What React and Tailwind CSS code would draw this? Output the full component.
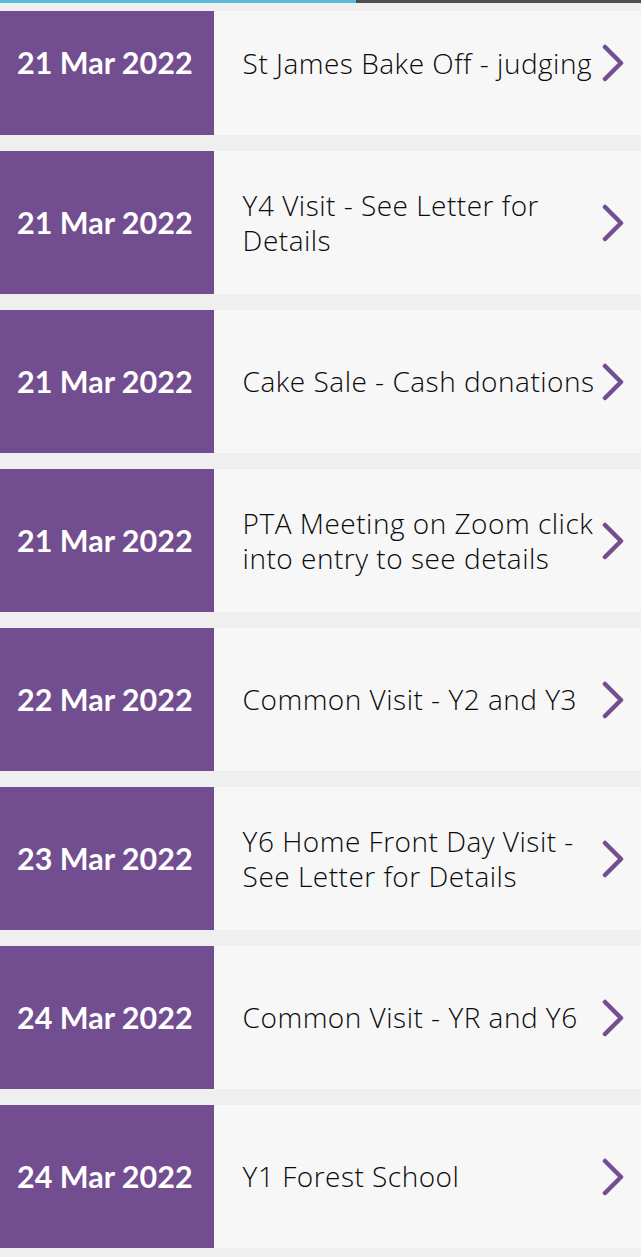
import React from "react";

const rows = [
  { date: "21 Mar 2022", title: "St James Bake Off - judging", first: true },
  { date: "21 Mar 2022", title: "Y4 Visit - See Letter for Details" },
  { date: "21 Mar 2022", title: "Cake Sale - Cash donations" },
  { date: "21 Mar 2022", title: "PTA Meeting on Zoom click into entry to see details" },
  { date: "22 Mar 2022", title: "Common Visit - Y2 and Y3" },
  { date: "23 Mar 2022", title: "Y6 Home Front Day Visit - See Letter for Details" },
  { date: "24 Mar 2022", title: "Common Visit - YR and Y6" },
  { date: "24 Mar 2022", title: "Y1 Forest School" },
];

function Chevron() {
  return (
    <svg width="24" height="38" viewBox="0 0 24 38" fill="none">
      <path d="M4 3 L20 19 L4 35" stroke="#724d8f" strokeWidth="4.5" strokeLinecap="round" strokeLinejoin="round" />
    </svg>
  );
}

function Row({ date, title, first }) {
  return (
    <div className={`flex bg-[#f7f7f7] ${first ? "h-[124px]" : "h-[143px]"}`}>
      <div className={`flex items-center bg-[#724d8f] pl-[17px] pr-[21px] ${first ? "pb-[20px]" : ""}`}>
        <span className="text-white font-bold text-[30.5px] whitespace-nowrap" style={{ fontFamily: "Lato, 'Open Sans', sans-serif" }}>
          {date}
        </span>
      </div>
      <div className={`flex flex-1 items-center pl-[29px] ${first ? "pb-[20px]" : ""}`}>
        <span className="text-[28px] leading-[35px] tracking-[0.5px] text-[#0a0a0a] font-light" style={{ fontFamily: "'Open Sans', Lato, sans-serif" }}>
          {title}
        </span>
      </div>
      <div className={`flex items-center pr-[16px] pl-[1px] ${first ? "pb-[20px]" : ""}`}>
        <Chevron />
      </div>
    </div>
  );
}

export default function App() {
  return (
    <div className="min-h-screen bg-[#efefef]" style={{ fontFamily: "Lato, sans-serif" }}>
      <div className="flex h-[3px]">
        <div className="w-[356px] bg-[#5bbad9]" />
        <div className="flex-1 bg-[#4d4d4d]" />
      </div>
      <div className="flex flex-col gap-[16px] pt-[8px] pb-[9px]">
        {rows.map((r, i) => (
          <Row key={i} {...r} />
        ))}
      </div>
    </div>
  );
}
